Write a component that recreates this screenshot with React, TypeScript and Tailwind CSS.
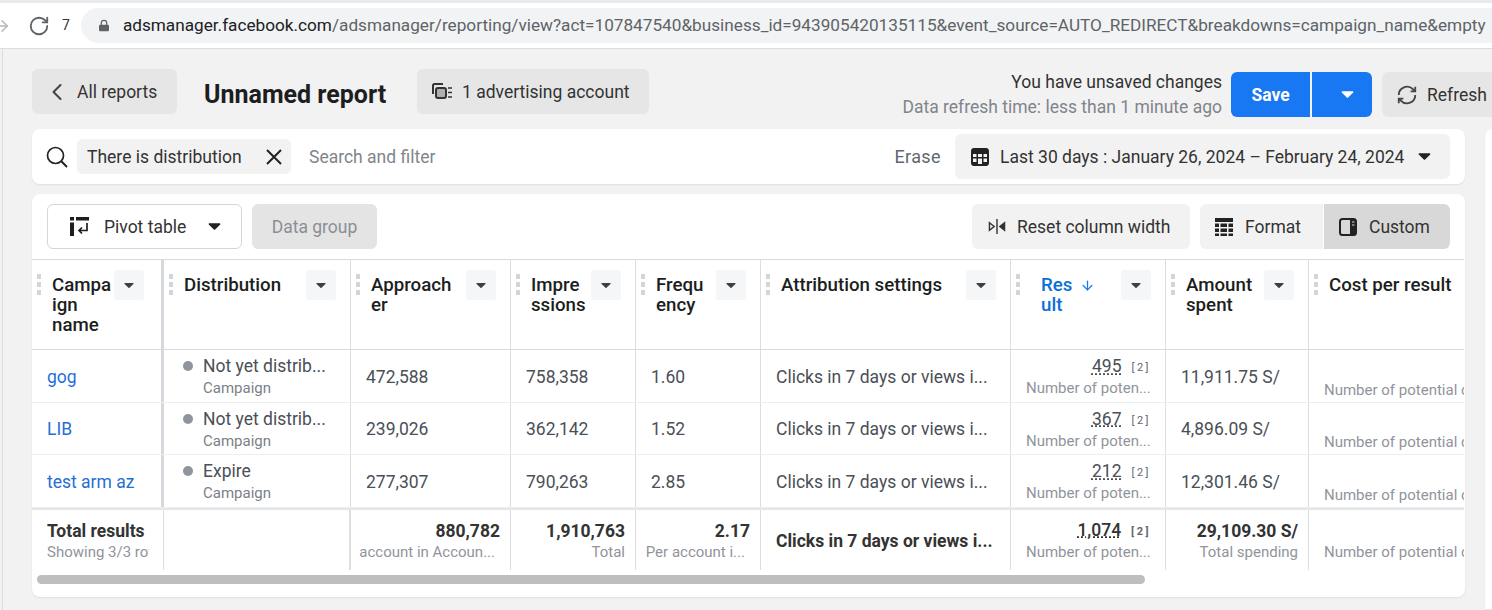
import { RotateCw, ChevronLeft, ArrowRight, ArrowDown } from "lucide-react";

// shared column template for every table row
const cols = "grid grid-cols-[132px_187px_160px_125px_125px_250px_155px_143px_155px]";

const rows = [
  { name: "gog", status: "Not yet distrib...", reach: "472,588", impr: "758,358", freq: "1.60", result: "495", spent: "11,911.75 S/" },
  { name: "LIB", status: "Not yet distrib...", reach: "239,026", impr: "362,142", freq: "1.52", result: "367", spent: "4,896.09 S/" },
  { name: "test arm az", status: "Expire", reach: "277,307", impr: "790,263", freq: "2.85", result: "212", spent: "12,301.46 S/" },
];

function Caret({ className = "" }: { className?: string }) {
  return (
    <svg viewBox="0 0 12 8" className={className} fill="currentColor">
      <path d="M1.2 1h9.6c.6 0 .9.7.5 1.1L6.6 6.8c-.3.3-.9.3-1.2 0L.7 2.1C.3 1.700.6 1 1.2 1z" />
    </svg>
  );
}

function Handle() {
  return (
    <div className="flex flex-col gap-[3px] w-[4px] mt-[4px] shrink-0">
      <div className="h-[5px] bg-[#d3d5d9]" />
      <div className="h-[5px] bg-[#d3d5d9]" />
      <div className="h-[5px] bg-[#d3d5d9]" />
    </div>
  );
}

function HeadCell({ lines, blue, arrow, menu = true, className = "", textClass = "" }: { lines: string[]; blue?: boolean; arrow?: boolean; menu?: boolean; className?: string; textClass?: string }) {
  return (
    <div className={"flex items-start pt-[10px] pl-[5px] pr-[14px] border-r border-[#dcdee1] " + className}>
      <Handle />
      <div className={"ml-[11px] flex-1 min-w-0 whitespace-nowrap text-[18.7px] leading-[20px] font-medium pt-[5px] " + (blue ? "text-[#0a6fd8] " : "text-[#1c1e21] ") + textClass}>
        {lines.map((line, i) => (
          <div key={line} className="flex items-center">
            {line}
            {arrow && i === 0 && <ArrowDown className="w-[15px] h-[15px] ml-[8px] text-[#1877f2]" strokeWidth={2} />}
          </div>
        ))}
      </div>
      {menu && (
        <div className="w-[30px] h-[30px] rounded-[3px] bg-[#f5f6f7] flex items-center justify-center shrink-0 text-[#3c4043]">
          <Caret className="w-[10px] h-[7px]" />
        </div>
      )}
    </div>
  );
}

function Cell({ children, className = "" }: { children: React.ReactNode; className?: string }) {
  return <div className={"flex items-center pt-[2px] px-[15px] border-r border-[#dcdee1] text-[17.5px] text-[#4b4f56] overflow-hidden whitespace-nowrap " + className}>{children}</div>;
}

function ResultCell({ value, bold }: { value: string; bold?: boolean }) {
  return (
    <div className="flex flex-col items-end pt-[3px] pl-[15px] pr-[14px] border-r border-[#dcdee1] overflow-hidden whitespace-nowrap justify-center">
      <div className="flex items-center gap-[10px]">
        <span className={"text-[17.5px] leading-[22px] text-[#4b4f56] underline decoration-dotted underline-offset-1 " + (bold ? "font-medium text-[#333]" : "")}>{value}</span>
        <span className={"text-[11px] tracking-[2.500px] pt-[4px] text-[#606770] " + (bold ? "font-bold" : "")}>[2]</span>
      </div>
      <div className="text-[15px] leading-[22px] text-[#90949c] w-full pr-[2px]">Number of poten...</div>
    </div>
  );
}

function PotentialCell({ total }: { total?: boolean }) {
  return (
    <div className={"flex items-end pl-[15px] overflow-hidden whitespace-nowrap text-[15px] leading-[20px] text-[#90949c] " + (total ? "pb-[8px]" : "pb-[2px]")}>
      Number of potential customers
    </div>
  );
}

function TotalCell({ value, sub, subClass = "" }: { value: string; sub: string; subClass?: string }) {
  return (
    <div className="flex flex-col justify-center items-end pt-[2px] pr-[10px] pl-[10px] border-r border-[#dcdee1] whitespace-nowrap overflow-hidden">
      <div className="text-[17.5px] leading-[22px] font-bold text-[#333]">{value}</div>
      <div className={"text-[15px] leading-[20px] text-[#90949c] " + subClass}>{sub}</div>
    </div>
  );
}

export default function App() {
  return (
    <div className="w-[1492px] h-[610px] overflow-hidden bg-[#f2f2f2] font-['Roboto',sans-serif] text-[#1c1e21]">
      {/* browser bar */}
      <div className="h-[49px] bg-white border-t-[3px] border-t-[#e8eaed] border-b border-b-[#dadce0] flex items-center overflow-hidden">
        <ArrowRight className="w-[18px] h-[18px] text-[#b5b7ba] ml-[-7px] shrink-0" strokeWidth={2} />
        <RotateCw className="w-[22px] h-[22px] text-[#5f6368] ml-[17px] shrink-0" strokeWidth={2} />
        <span className="ml-[12px] text-[14px] text-[#333] shrink-0">7</span>
        <div className="ml-[11px] h-[35px] w-[1440px] shrink-0 rounded-l-full bg-[#f1f3f4] flex items-center pl-[18px] overflow-hidden whitespace-nowrap text-[17.2px]">
          <svg viewBox="0 0 12 14" className="w-[10px] h-[13px] text-[#5f6368] shrink-0" fill="currentColor">
            <path d="M2 6V4a4 4 0 0 1 8 0v2h.5c.8 0 1.5.7 1.5 1.5v5c0 .8-.7 1.5-1.5 1.5h-9C.7 14 0 13.300 0 12.500v-5C0 6.700.7 6 1.500 6H2zm1.500 0h5V4a2.500 2.500 0 0 0-5 0v2z" />
          </svg>
          <span className="ml-[14px] text-[#202124]">adsmanager.facebook.com</span>
          <span className="text-[#5f6368]">/adsmanager/reporting/view?act=107847540&amp;business_id=943905420135115&amp;event_source=AUTO_REDIRECT&amp;breakdowns=campaign_name&amp;empty</span>
        </div>
      </div>

      <div className="ml-[2px] h-[561px] border-l border-[#dadce0] pl-[29px] pt-[20px]">
        {/* report header */}
        <div className="flex items-center w-[1486px] h-[45px]">
          <div className="h-[45px] w-[145px] rounded-[6px] bg-[#e6e6e6] flex items-center pl-[14px] pt-[2px] text-[17.5px] shrink-0">
            <ChevronLeft className="w-[28px] h-[28px] text-[#444] shrink-0 ml-[-3px] mt-[-2px]" strokeWidth={1.8} />
            <span className="ml-[6px] text-[#333]">All reports</span>
          </div>
          <div className="ml-[27px] mt-[7px] text-[25px] font-bold text-[#1c1e21] whitespace-nowrap w-[213px] shrink-0">Unnamed report</div>
          <div className="h-[45px] w-[232px] rounded-[6px] bg-[#e6e6e6] flex items-center pl-[15px] pt-[2px] text-[17.5px] shrink-0">
            <svg viewBox="0 0 20 17" className="w-[20px] h-[17px] text-[#333] shrink-0 mt-[-2px]" fill="none" stroke="currentColor" strokeWidth="2">
              <path d="M1 11V2.500C1 1.700 1.700 1 2.500 1H11" />
              <rect x="4" y="5" width="10" height="10" rx="2" fill="currentColor" fillOpacity=".3" />
              <path d="M16 5h4M16 9.500h4M16 14h4" strokeWidth="1.500" />
            </svg>
            <span className="ml-[10px] text-[#333] whitespace-nowrap">1 advertising account</span>
          </div>
          <div className="flex-1 mt-[6px] flex flex-col items-end text-[17.5px] leading-[25px] whitespace-nowrap">
            <span className="text-[#333]">You have unsaved changes</span>
            <span className="text-[#80858c]">Data refresh time: less than 1 minute ago</span>
          </div>
          <div className="ml-[9px] mt-[6px] h-[45px] w-[79px] rounded-l-[6px] bg-[#1877f2] text-white text-[17.5px] font-bold flex items-center justify-center pt-[2px] shrink-0">Save</div>
          <div className="ml-[2px] mt-[6px] h-[45px] w-[60px] rounded-r-[6px] bg-[#1877f2] text-white flex items-center justify-center pl-[10px] shrink-0">
            <Caret className="w-[13px] h-[9px]" />
          </div>
          <div className="ml-[10px] mt-[6px] h-[45px] w-[136px] rounded-[6px] bg-[#e6e6e6] flex items-center pl-[14px] text-[17.5px] shrink-0">
            <svg viewBox="0 0 24 24" className="w-[22px] h-[22px] text-[#444] shrink-0" fill="none" stroke="currentColor" strokeWidth="2">
              <path d="M3 12a9 9 0 0 1 15.500-6.300L21 8" />
              <path d="M21 3v5h-5" />
              <path d="M21 12a9 9 0 0 1-15.500 6.300L3 16" />
              <path d="M3 21v-5h5" />
            </svg>
            <span className="ml-[9px] pt-[2px] text-[#333]">Refresh</span>
          </div>
        </div>

        <div className="flex gap-[20px] mt-[15px]">
          <div className="w-[1433px] shrink-0 flex flex-col gap-[10px]">
            {/* filter bar */}
            <div className="h-[55px] bg-white rounded-[8px] shadow-[0_1px_2px_rgba(0,0,0,0.08)] flex items-center pl-[14px] pr-[15px]">
              <svg viewBox="0 0 22 22" className="w-[22px] h-[22px] text-[#222] shrink-0" fill="none" stroke="currentColor" strokeWidth="1.700">
                <circle cx="9.500" cy="9.500" r="8" />
                <path d="M15.300 15.300L21 21" strokeWidth="2" />
              </svg>
              <div className="ml-[9px] h-[35px] w-[214px] rounded-[6px] bg-[#f2f2f2] flex items-center pl-[10px] text-[17.5px] text-[#333] shrink-0">
                <span className="whitespace-nowrap pt-[2px]">There is distribution</span>
                <svg viewBox="0 0 18 18" className="w-[18px] h-[18px] ml-[23px] text-[#222] shrink-0" fill="none" stroke="currentColor" strokeWidth="2">
                  <path d="M2 2l14 14M16 2L2 16" />
                </svg>
              </div>
              <span className="ml-[18px] pt-[2px] text-[17.5px] text-[#80858c] whitespace-nowrap">Search and filter</span>
              <span className="ml-auto text-[18px] tracking-[0.4px] text-[#606770]">Erase</span>
              <div className="ml-[14px] h-[45px] w-[495px] rounded-[6px] bg-[#f2f2f2] flex items-center pl-[15px] text-[17.5px] text-[#333] shrink-0">
                <svg viewBox="0 0 20 20" className="w-[20px] h-[20px] text-[#222] shrink-0" fill="currentColor">
                  <path fillRule="evenodd" d="M4 1h12c1.700 0 3 1.300 3 3v12c0 1.700-1.300 3-3 3H4c-1.700 0-3-1.300-3-3V4c0-1.700 1.300-3 3-3zM3 7v3h3.500V7H3zm5 0v3h4V7H8zm5.500 0v3H17V7h-3.500zM3 11.500V15h3.500v-3.500H3zm5 0V17h4v-5.500H8zm5.500 0V15H17v-3.500h-3.500z" />
                </svg>
                <span className="ml-[10px] pt-[2px] whitespace-nowrap">Last 30 days : January 26, 2024 – February 24, 2024</span>
                <Caret className="w-[13px] h-[9px] ml-[14px] text-[#222]" />
              </div>
            </div>

            {/* table card */}
            <div className="h-[403px] bg-white rounded-[8px] shadow-[0_1px_2px_rgba(0,0,0,0.08)] overflow-hidden">
              <div className="h-[65px] flex items-start pt-[10px] pl-[15px] pr-[15px] text-[17.5px]">
                <div className="h-[45px] w-[195px] rounded-[6px] border border-[#d4d6da] flex items-center pl-[21px]">
                  <svg viewBox="0 0 21 21" className="w-[21px] h-[21px] text-[#1c1e21] shrink-0" fill="currentColor">
                    <path d="M1 1h4v3.500H1zM7 1h13v3.500H7zM1 6.500h4V20H1z" />
                    <path d="M18 7v7.500H10M13 11.500l-3 3 3 3" fill="none" stroke="currentColor" strokeWidth="1.700" />
                  </svg>
                  <span className="ml-[14px] pt-[2px] text-[#333] whitespace-nowrap">Pivot table</span>
                  <Caret className="w-[13px] h-[9px] ml-[22px] text-[#222]" />
                </div>
                <div className="ml-[10px] h-[45px] w-[125px] rounded-[6px] bg-[#e4e4e4] flex items-center justify-center pt-[2px] text-[#8a8f96]">Data group</div>
                <div className="ml-auto h-[45px] w-[218px] rounded-[6px] bg-[#f2f2f2] flex items-center pl-[15px] text-[#333] whitespace-nowrap">
                  <svg viewBox="0 0 20 18" className="w-[20px] h-[17px] text-[#333] shrink-0" fill="none" stroke="currentColor" strokeWidth="1.500">
                    <path d="M10 1v16" />
                    <path d="M2 5l5 4-5 4z" />
                    <path d="M18 5l-5 4 5 4z" fill="currentColor" />
                  </svg>
                  <span className="ml-[10px] pt-[2px]">Reset column width</span>
                </div>
                <div className="ml-[10px] h-[45px] w-[123px] rounded-l-[6px] bg-[#f2f2f2] flex items-center pl-[14px] text-[#333]">
                  <svg viewBox="0 0 20 20" className="w-[20px] h-[20px] text-[#222] shrink-0" fill="currentColor">
                    <path d="M1 1h18v4H1zM1 6.500h4v3.500H1zM6.500 6.500H13v3.500H6.500zM14.500 6.500H19v3.500h-4.500zM1 11.500h4V15H1zM6.500 11.500H13V15H6.500zM14.500 11.500H19V15h-4.500zM1 16.500h4V19H1zM6.500 16.500H13V19H6.500zM14.500 16.500H19V19h-4.500z" />
                  </svg>
                  <span className="ml-[11px] pt-[2px]">Format</span>
                </div>
                <div className="ml-[1px] h-[45px] w-[126px] rounded-r-[6px] bg-[#d8d8d8] flex items-center pl-[14px] text-[#333]">
                  <svg viewBox="0 0 20 20" className="w-[20px] h-[20px] text-[#222] shrink-0">
                    <rect x="2" y="2" width="16" height="16" rx="2.500" fill="none" stroke="currentColor" strokeWidth="2" />
                    <path d="M12 2h4c1.100 0 2 .9 2 2v12c0 1.100-.9 2-2 2h-4z" fill="currentColor" />
                    <path d="M14 5h2.500M14 8h2.500" stroke="#d8d8d8" strokeWidth="1.200" />
                  </svg>
                  <span className="ml-[11px] pt-[2px]">Custom</span>
                </div>
              </div>

              <div className="w-[1432px] overflow-hidden">
                {/* column headers */}
                <div className={cols + " h-[91px] border-t border-b border-[#d8dadd]"}>
                  <HeadCell lines={["Campa", "ign", "name"]} className="border-r-[3px] border-r-[#d5d8dc] !pr-[17px]" />
                  <HeadCell lines={["Distribution"]} textClass="-ml-px" />
                  <HeadCell lines={["Approach", "er"]} />
                  <HeadCell lines={["Impre", "ssions"]} />
                  <HeadCell lines={["Frequ", "ency"]} />
                  <HeadCell lines={["Attribution settings"]} />
                  <HeadCell lines={["Res", "ult"]} blue arrow textClass="pl-[10px]" />
                  <HeadCell lines={["Amount", "spent"]} />
                  <HeadCell lines={["Cost per result"]} menu={false} className="border-r-0" />
                </div>

                {rows.map((r) => (
                  <div key={r.name} className={cols + " h-[52.5px] border-b border-[#eceef0]"}>
                    <Cell className="border-r-[3px] border-r-[#d5d8dc] !text-[#1f6fd6]">{r.name}</Cell>
                    <div className="flex items-start pl-[19px] pt-[5px] border-r border-[#dcdee1]">
                      <div className="w-[10px] h-[10px] rounded-full bg-[#90949c] mt-[6px] shrink-0" />
                      <div className="ml-[10px] whitespace-nowrap">
                        <div className="text-[17.5px] leading-[22px] text-[#4b4f56]">{r.status}</div>
                        <div className="text-[15px] leading-[22px] text-[#7a7f87]">Campaign</div>
                      </div>
                    </div>
                    <Cell>{r.reach}</Cell>
                    <Cell>{r.impr}</Cell>
                    <Cell>{r.freq}</Cell>
                    <Cell>Clicks in 7 days or views i...</Cell>
                    <ResultCell value={r.result} />
                    <Cell>{r.spent}</Cell>
                    <PotentialCell />
                  </div>
                ))}

                {/* totals */}
                <div className={cols + " h-[62px] border-t-2 border-[#e4e6e8]"}>
                  <div className="flex flex-col justify-center pt-[2px] pl-[15px] border-r border-[#dcdee1] whitespace-nowrap">
                    <div className="text-[17.5px] leading-[22px] font-bold text-[#333]">Total results</div>
                    <div className="w-[102px] overflow-hidden text-[15px] leading-[20px] text-[#90949c]">Showing 3/3 rows</div>
                  </div>
                  <div className="border-r-2 border-[#dcdee1]" />
                  <TotalCell value="880,782" sub="account in Accoun..." subClass="mr-[5px]" />
                  <TotalCell value="1,910,763" sub="Total" />
                  <TotalCell value="2.17" sub="Per account i..." subClass="mr-[5px]" />
                  <Cell className="font-bold !text-[#333] !pt-[3px]">Clicks in 7 days or views i...</Cell>
                  <ResultCell value="1,074" bold />
                  <TotalCell value="29,109.30 S/" sub="Total spending" />
                  <PotentialCell total />
                </div>
              </div>

              {/* horizontal scrollbar */}
              <div className="pl-[5px] mt-[5px]">
                <div className="w-[1108px] h-[9px] rounded-full bg-[#bebebe]" />
              </div>
            </div>
          </div>

          {/* right panel */}
          <div className="w-[60px] h-[480px] shrink-0 bg-white rounded-tl-[8px] shadow-[0_1px_2px_rgba(0,0,0,0.08)]" />
        </div>
      </div>
    </div>
  );
}
